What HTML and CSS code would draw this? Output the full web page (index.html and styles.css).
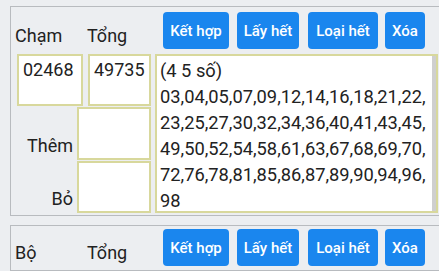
FILE: index.html
```html
<!DOCTYPE html>
<html>
<head>
<meta charset="utf-8">
<link rel="stylesheet" href="styles.css">
</head>
<body>
<div class="page">
  <section class="panel">
    <div class="head">
      <div class="labels">
        <span class="lbl lbl-a">Chạm</span>
        <span class="lbl lbl-b">Tổng</span>
      </div>
      <div class="btns">
        <button class="btn w1">Kết hợp</button>
        <button class="btn w2">Lấy hết</button>
        <button class="btn w3">Loại hết</button>
        <button class="btn w4">Xóa</button>
      </div>
    </div>
    <div class="body">
      <div class="left">
        <div class="pair">
          <div class="box small a">02468</div>
          <div class="box small b">49735</div>
        </div>
        <div class="row">
          <span class="rlbl">Thêm</span>
          <div class="box field"></div>
        </div>
        <div class="row">
          <span class="rlbl">Bỏ</span>
          <div class="box field"></div>
        </div>
      </div>
      <div class="box big">(4 5 số)<br>03,04,05,07,09,12,14,16,18,21,22,<br>23,25,27,30,32,34,36,40,41,43,45,<br>49,50,52,54,58,61,63,67,68,69,70,<br>72,76,78,81,85,86,87,89,90,94,96,<br>98</div>
    </div>
  </section>
  <section class="panel second">
    <div class="head">
      <div class="labels">
        <span class="lbl lbl-a">Bộ</span>
        <span class="lbl lbl-b">Tổng</span>
      </div>
      <div class="btns">
        <button class="btn w1">Kết hợp</button>
        <button class="btn w2">Lấy hết</button>
        <button class="btn w3">Loại hết</button>
        <button class="btn w4">Xóa</button>
      </div>
    </div>
  </section>
</div>
</body>
</html>
```
FILE: styles.css
```css
html, body {
  margin: 0;
  padding: 0;
  background: #eceef1;
  overflow: hidden;
  width: 439px;
  height: 271px;
}
.page {
  font-family: Roboto, "Noto Sans", sans-serif;
  color: #222;
  padding: 6px 0 0 10px;
  display: flex;
  flex-direction: column;
  gap: 9px;
}
.panel {
  width: 440px;
  border: 1px solid #b8bbbf;
  background: #eceef1;
  padding: 5px 0 2px 4px;
  box-sizing: border-box;
}
.head {
  display: flex;
  align-items: flex-end;
  height: 37px;
}
.labels {
  width: 148px;
  display: flex;
  font-size: 18px;
  padding-bottom: 3px;
}
.lbl-a { width: 72px; }
.btns {
  display: flex;
  gap: 7px;
  align-self: flex-start;
}
.btn {
  height: 37px;
  border: none;
  border-radius: 4px;
  background: #1a86ee;
  color: #fff;
  font-family: Roboto, "Noto Sans", sans-serif;
  font-size: 15px;
  font-weight: 500;
  padding: 0;
}
.w1 { width: 66px; }
.w2 { width: 62px; margin-left: 1px; }
.w3 { width: 70px; margin-left: 2px; }
.w4 { width: 40px; }
.body {
  display: flex;
  margin-top: 5px;
  gap: 4px;
}
.left {
  width: 134px;
  margin-left: 2px;
  display: flex;
  flex-direction: column;
  gap: 1px;
}
.box {
  background: #fff;
  border: 2px solid #d8d89c;
  box-sizing: border-box;
  font-size: 18px;
}
.pair {
  display: flex;
  gap: 5px;
}
.small {
  height: 52px;
  padding: 3px 0 0 4px;
}
.small.a { width: 66px; }
.small.b { width: 63px; }
.row {
  display: flex;
  align-items: flex-end;
  justify-content: flex-end;
  gap: 4px;
}
.rlbl {
  font-size: 18px;
  padding-bottom: 4px;
}
.field {
  width: 74px;
  height: 53px;
}
.row + .row .field { height: 52px; }
.big {
  width: 283px;
  height: 159px;
  overflow: hidden;
  font-size: 18.3px;
  line-height: 26px;
  padding: 2px 0 0 3px;
  box-shadow: inset -4px 0 0 #cfcfcf;
}
.second {
  height: 46px;
}
.second .head {
  margin-top: -2px;
}
```
